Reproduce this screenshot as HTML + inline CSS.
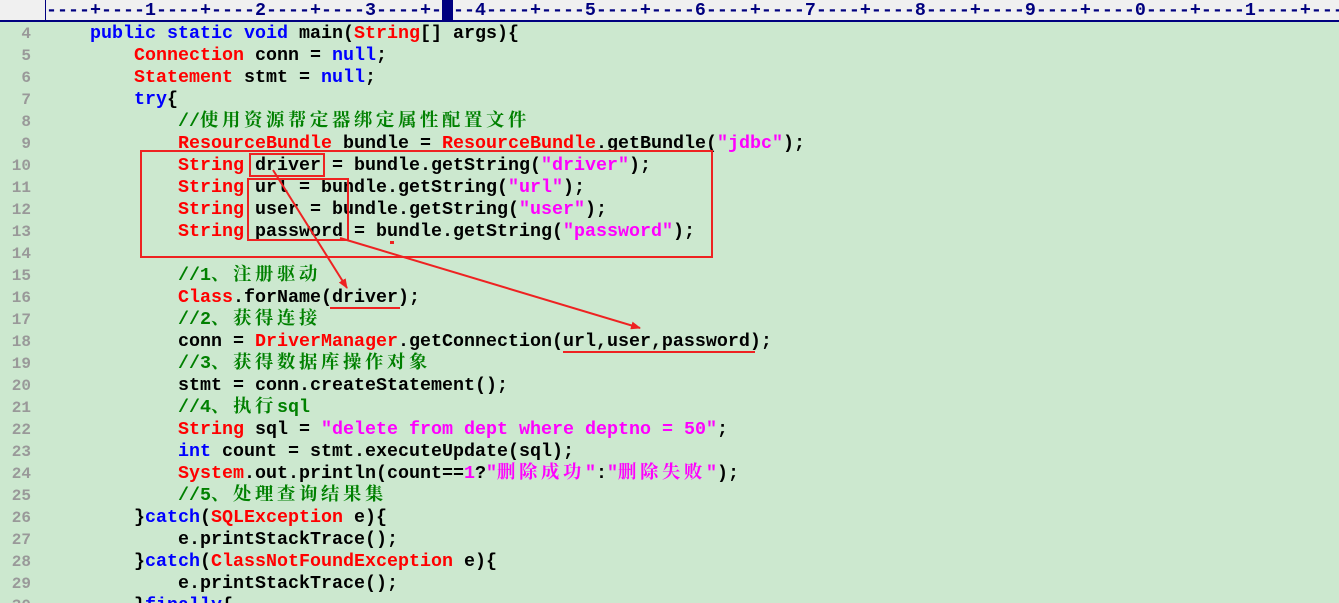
<!DOCTYPE html>
<html><head><meta charset="utf-8"><style>
html,body{margin:0;width:1339px;height:603px;overflow:hidden;}
body{background:#cce8cf;position:relative;font-family:"Liberation Mono","Noto Sans CJK SC",monospace;font-weight:bold;font-size:18.33px;}
#ruler{position:absolute;left:0;top:0;width:1339px;height:22px;background:#f0f0f0;border-bottom:2px solid #000080;box-sizing:border-box;}
#ruler .t{position:absolute;left:46px;top:1px;color:#000080;white-space:pre;line-height:20px;}
#ruler .v{position:absolute;left:45px;top:0;width:1px;height:22px;background:#000080;}
#ruler .c{position:absolute;left:442px;top:0;width:11px;height:22px;background:#000080;}
.l{position:absolute;left:0;height:22px;line-height:22px;white-space:pre;color:#000;width:1339px;}
.n{position:absolute;left:0;width:31px;text-align:right;color:#999;font-size:16px;}
.code{position:absolute;left:46px;}
.k{color:#0000ff}.r{color:#ff0000}.s{color:#ff00ff}.g{color:#008000}
.z{letter-spacing:3.67px;font-weight:bold;font-family:"Noto Serif CJK SC",serif;display:inline-block;height:22px;line-height:22px;vertical-align:top;overflow:visible;position:relative;top:-3px}
svg{position:absolute;left:0;top:0}
</style></head><body>
<div id="ruler"><div class="v"></div><div class="c"></div><div class="t">----+----1----+----2----+----3----+----4----+----5----+----6----+----7----+----8----+----9----+----0----+----1----+---</div></div>

<div class="l" style="top:23px"><span class="n">4</span><span class="code">    <span class="k">public static void</span> main(<span class="r">String</span>[] args){</span></div>
<div class="l" style="top:45px"><span class="n">5</span><span class="code">        <span class="r">Connection</span> conn = <span class="k">null</span>;</span></div>
<div class="l" style="top:67px"><span class="n">6</span><span class="code">        <span class="r">Statement</span> stmt = <span class="k">null</span>;</span></div>
<div class="l" style="top:89px"><span class="n">7</span><span class="code">        <span class="k">try</span>{</span></div>
<div class="l" style="top:111px"><span class="n">8</span><span class="code">            <span class="g">//<span class="z">使用资源帮定器绑定属性配置文件</span></span></span></div>
<div class="l" style="top:133px"><span class="n">9</span><span class="code">            <span class="r">ResourceBundle</span> bundle = <span class="r">ResourceBundle</span>.getBundle(<span class="s">"jdbc"</span>);</span></div>
<div class="l" style="top:155px"><span class="n">10</span><span class="code">            <span class="r">String</span> driver = bundle.getString(<span class="s">"driver"</span>);</span></div>
<div class="l" style="top:177px"><span class="n">11</span><span class="code">            <span class="r">String</span> url = bundle.getString(<span class="s">"url"</span>);</span></div>
<div class="l" style="top:199px"><span class="n">12</span><span class="code">            <span class="r">String</span> user = bundle.getString(<span class="s">"user"</span>);</span></div>
<div class="l" style="top:221px"><span class="n">13</span><span class="code">            <span class="r">String</span> password = bundle.getString(<span class="s">"password"</span>);</span></div>
<div class="l" style="top:243px"><span class="n">14</span></div>
<div class="l" style="top:265px"><span class="n">15</span><span class="code">            <span class="g">//1<span class="z">、注册驱动</span></span></span></div>
<div class="l" style="top:287px"><span class="n">16</span><span class="code">            <span class="r">Class</span>.forName(driver);</span></div>
<div class="l" style="top:309px"><span class="n">17</span><span class="code">            <span class="g">//2<span class="z">、获得连接</span></span></span></div>
<div class="l" style="top:331px"><span class="n">18</span><span class="code">            conn = <span class="r">DriverManager</span>.getConnection(url,user,password);</span></div>
<div class="l" style="top:353px"><span class="n">19</span><span class="code">            <span class="g">//3<span class="z">、获得数据库操作对象</span></span></span></div>
<div class="l" style="top:375px"><span class="n">20</span><span class="code">            stmt = conn.createStatement();</span></div>
<div class="l" style="top:397px"><span class="n">21</span><span class="code">            <span class="g">//4<span class="z">、执行</span>sql</span></span></div>
<div class="l" style="top:419px"><span class="n">22</span><span class="code">            <span class="r">String</span> sql = <span class="s">"delete from dept where deptno = 50"</span>;</span></div>
<div class="l" style="top:441px"><span class="n">23</span><span class="code">            <span class="k">int</span> count = stmt.executeUpdate(sql);</span></div>
<div class="l" style="top:463px"><span class="n">24</span><span class="code">            <span class="r">System</span>.out.println(count==<span class="s">1</span>?<span class="s">"<span class="z">删除成功</span>"</span>:<span class="s">"<span class="z">删除失败</span>"</span>);</span></div>
<div class="l" style="top:485px"><span class="n">25</span><span class="code">            <span class="g">//5<span class="z">、处理查询结果集</span></span></span></div>
<div class="l" style="top:507px"><span class="n">26</span><span class="code">        }<span class="k">catch</span>(<span class="r">SQLException</span> e){</span></div>
<div class="l" style="top:529px"><span class="n">27</span><span class="code">            e.printStackTrace();</span></div>
<div class="l" style="top:551px"><span class="n">28</span><span class="code">        }<span class="k">catch</span>(<span class="r">ClassNotFoundException</span> e){</span></div>
<div class="l" style="top:573px"><span class="n">29</span><span class="code">            e.printStackTrace();</span></div>
<div class="l" style="top:595px"><span class="n">30</span><span class="code">        }<span class="k">finally</span>{</span></div>

<svg width="1339" height="603">
<defs><marker id="a" markerWidth="10" markerHeight="8" refX="9" refY="4" orient="auto" markerUnits="userSpaceOnUse"><path d="M0,0 L10,4 L0,8 z" fill="#ee2222"/></marker></defs>
<g fill="none" stroke="#ee2222" stroke-width="2">
<rect x="141" y="151" width="571" height="106"/>
<rect x="250" y="154" width="74" height="22"/>
<rect x="248" y="179" width="100" height="61"/>
<line x1="330" y1="308" x2="400" y2="308"/>
<line x1="563" y1="352" x2="755" y2="352"/>
<line x1="273" y1="170" x2="347" y2="288" marker-end="url(#a)"/>
<line x1="340" y1="238" x2="640" y2="328" marker-end="url(#a)"/>
</g>
<rect x="390" y="241" width="4" height="3" fill="#ee2222"/>
</svg>
</body></html>
